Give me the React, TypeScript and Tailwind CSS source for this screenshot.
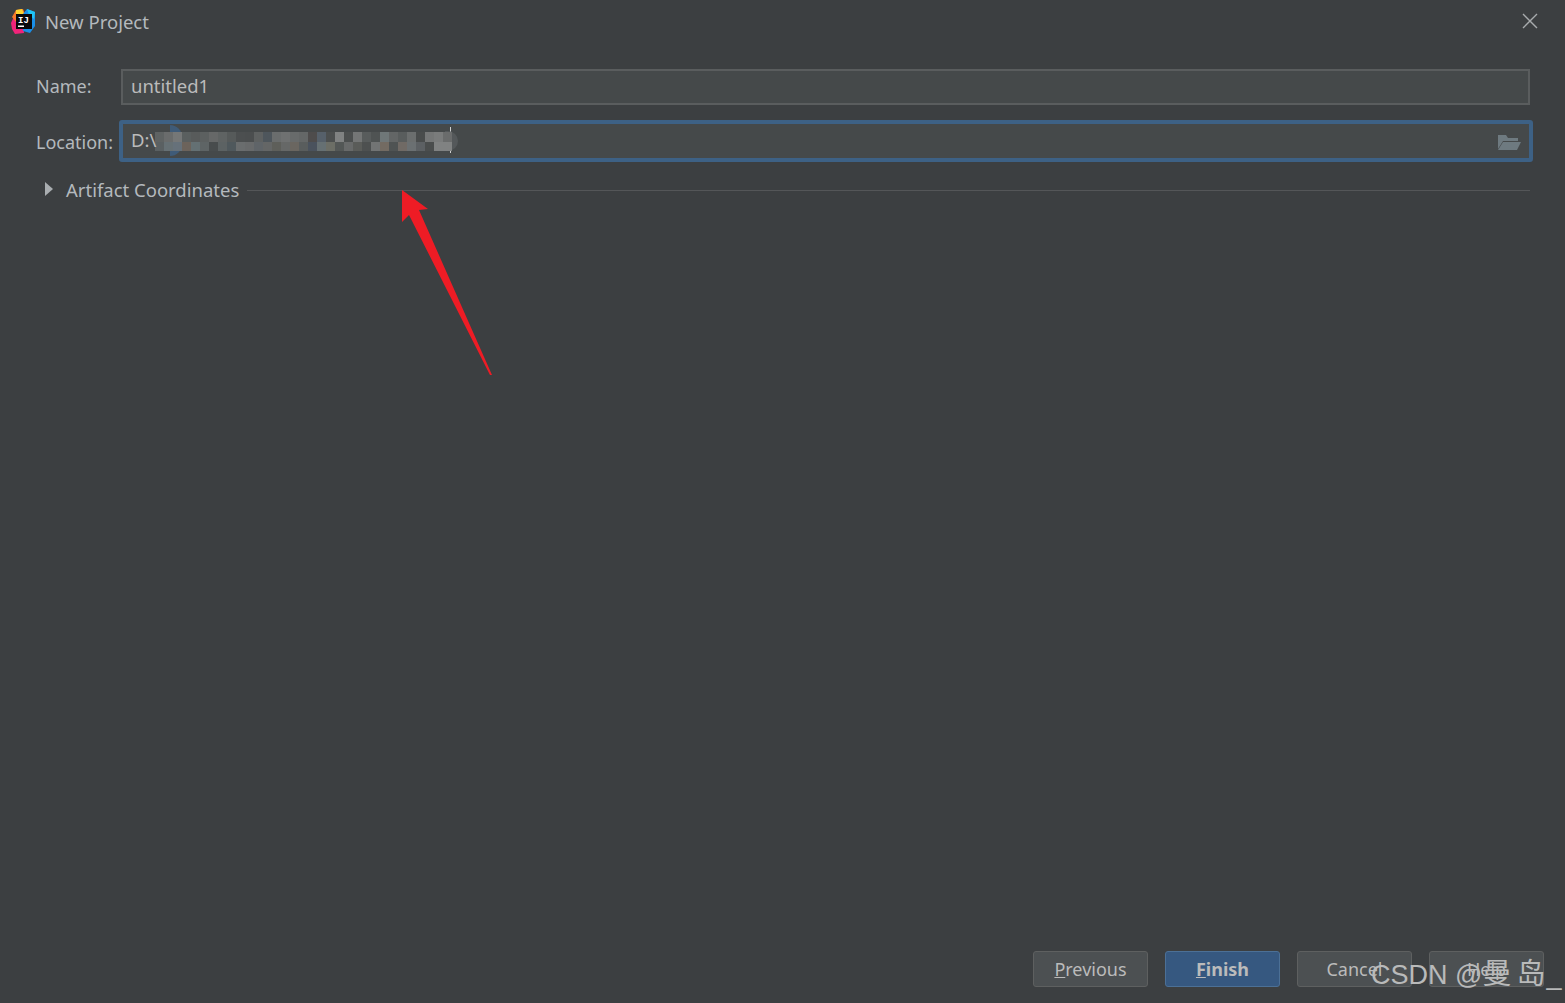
import React from 'react';

const font = "font-['Noto_Sans','Open_Sans',sans-serif]";

// pixelated part of the location path, two rows of blocks
const topRow = ['#5f6363', '#6a6c6c', '#757777', '#5a5f5f', '#585b5b', '#5c6060', '#666868', '#5f6363', '#565a5a', '#4c4f50', '#4b4e4f', '#5e6161', '#4e565c', '#6a6d6d', '#6f7171', '#686b6b', '#646767', '#4e4c4c', '#56606a', '#4c4f4f', '#808282', '#4c4f4f', '#747676', '#585c5c', '#4f5353', '#6f7778', '#636666', '#595d5d', '#6b6e6e', '#494c4c', '#757777', '#7a7c7c', '#6a6c6c'];
const bottomRow = ['#5a6062', '#667074', '#66717a', '#6c635b', '#647073', '#5e6465', '#484c4d', '#5c6263', '#4f585c', '#6a6d6e', '#686a6b', '#5f6468', '#646666', '#5e5f5a', '#666867', '#6a6660', '#595d5d', '#4a525d', '#667073', '#6c6e66', '#535756', '#686a6a', '#5a5c59', '#4d5050', '#727474', '#736b62', '#4f5353', '#706a65', '#6b7072', '#5c6063', '#4a4d4d', '#808282', '#808282'];

function Button({ children, primary }: { children: React.ReactNode; primary?: boolean }) {
  return (
    <button
      className={
        primary
          ? 'w-[115px] h-[36px] pt-[1px] rounded-[3px] border border-[#4c7096] bg-[#365880] text-[#bbbbbb] text-[18px] font-bold flex items-center justify-center'
          : 'w-[115px] h-[36px] pt-[1px] rounded-[3px] border border-[#5e6060] bg-[#4c5052] text-[#bbbbbb] text-[18px] flex items-center justify-center'
      }
    >
      {children}
    </button>
  );
}

function IdeaLogo() {
  return (
    <svg width="26" height="26" viewBox="0 0 26 26" className="shrink-0">
      <path d="M2 14 L7 3 L14 4 L15 24 L6 25 L3 20 Z" fill="#f0247a" />
      <path d="M3 8 L7 1 L14 0 L16 5 L7 13 Z" fill="#f97a2a" />
      <path d="M7 1 L13 0 L15 5 L7 6 Z" fill="#fcd32f" />
      <path d="M14 5 L18 0 L26 3 L26 17 L21 24 L14 22 Z" fill="#1a8fe8" />
      <path d="M18 0 L26 3 L25 10 L20 6 Z" fill="#20c4f4" />
      <rect x="7" y="5" width="16" height="15" fill="#0a0a0a" />
      <text x="9" y="13.5" fill="#ffffff" fontSize="9" fontWeight="700" fontFamily="Liberation Mono, monospace">IJ</text>
      <rect x="9" y="16.5" width="6" height="1.5" fill="#ffffff" />
    </svg>
  );
}

export default function App() {
  return (
    <div className={`relative w-[1565px] h-[1003px] overflow-hidden bg-[#3c3f41] flex flex-col ${font}`}>
      {/* title bar */}
      <div className="h-[44px] shrink-0 flex items-center pl-[9px] pr-[26px]">
        <IdeaLogo />
        <span className="ml-[10px] text-[18.5px] text-[#b4b9bd]">New Project</span>
        <svg width="18" height="18" viewBox="0 0 18 18" className="ml-auto -mt-[2px] text-[#a8abad]">
          <path d="M2 2 L16 16 M16 2 L2 16" stroke="currentColor" strokeWidth="1.4" fill="none" />
        </svg>
      </div>

      {/* form */}
      <div className="flex-1 pl-[36px] pr-[35px]">
        <div className="mt-[25px] flex items-center h-[36px]">
          <label className="w-[85px] shrink-0 text-[18px] text-[#b4b9bd] pb-[2px]">Name:</label>
          <div className="flex-1 h-[36px] border-2 border-[#5a5d5e] bg-[#45494a] pl-[8px] pb-[2px] flex items-center text-[18.5px] text-[#bbbbbb]">
            untitled1
          </div>
        </div>

        <div className="mt-[15px] flex items-center h-[42px]">
          <label className="w-[83px] shrink-0 text-[18px] text-[#b4b9bd] pt-[2px]">Location:</label>
          <div className="relative flex-1 h-[42px] -mr-[3px] rounded-[3px] border-[4px] border-[#3d6185] bg-[#45494a] pl-[8px] pb-[2px] flex items-center text-[18.5px] text-[#bbbbbb]">
            <div className="absolute left-[327px] top-[3px] w-px h-[26px] bg-[#cfd0d0]" />
            {/* blue and grey smears left round the pixelated area */}
            <div className="absolute left-[47px] top-[1px] w-[12px] h-[31px] rounded-r-full bg-[#3f5b78]" />
            <div className="absolute left-[322px] top-[7px] w-[13px] h-[20px] rounded-r-full bg-[#54585a]" />
            <div className="absolute left-[32px] top-[8px] flex flex-col">
              <div className="flex h-[10px]">
                {topRow.map((c, i) => (
                  <div key={i} className="w-[9px] h-full" style={{ backgroundColor: c }} />
                ))}
              </div>
              <div className="flex h-[9px]">
                {bottomRow.map((c, i) => (
                  <div key={i} className="w-[9px] h-full" style={{ backgroundColor: c }} />
                ))}
              </div>
            </div>
            <span className="relative">D:\</span>
            <svg width="24" height="18" viewBox="0 0 24 18" className="absolute right-[8px] top-[9px]">
              <path d="M1 2 H9 L11 5 H21 V8 H6 L1 16 Z" fill="#6e7a80" />
              <path d="M6 9 H24 L20 17 H1 Z" fill="#6e7a80" />
            </svg>
          </div>
        </div>

        <div className="mt-[10px] flex items-center h-[36px]">
          <svg width="10" height="14" viewBox="0 0 10 14" className="ml-[8px] -mt-[2px] shrink-0">
            <path d="M1 0 L9 7 L1 14 Z" fill="#a9adb0" />
          </svg>
          <span className="ml-[12px] pb-[1px] text-[18.5px] text-[#b4b9bd]">Artifact Coordinates</span>
          <div className="ml-[8px] mt-[1px] flex-1 h-px bg-[#545658]" />
        </div>
      </div>

      {/* footer buttons */}
      <div className="h-[52px] shrink-0 flex justify-end gap-[17px] pr-[21px]">
        <Button>
          <span><span className="underline">P</span>revious</span>
        </Button>
        <Button primary>
          <span><span className="underline">F</span>inish</span>
        </Button>
        <Button>Cancel</Button>
        <Button>Help</Button>
      </div>

      {/* annotation arrow over the dialog */}
      <svg width="100" height="200" viewBox="0 0 100 200" className="absolute left-[400px] top-[188px]">
        <path d="M2 2 L28 21 L19 22 L92 187 L90 187 L9 27 L2 34 Z" fill="#ee1c25" />
      </svg>

      {/* watermark */}
      <div className="absolute left-[1371px] top-[955px] text-[27px] leading-[38px] whitespace-nowrap text-[#b9baba] font-['Liberation_Sans','Noto_Sans_CJK_SC',sans-serif]">
        CSDN @<span className="text-[29px] tracking-[5px]">曼岛</span><span className="-ml-[4px]">_</span>
      </div>
    </div>
  );
}
